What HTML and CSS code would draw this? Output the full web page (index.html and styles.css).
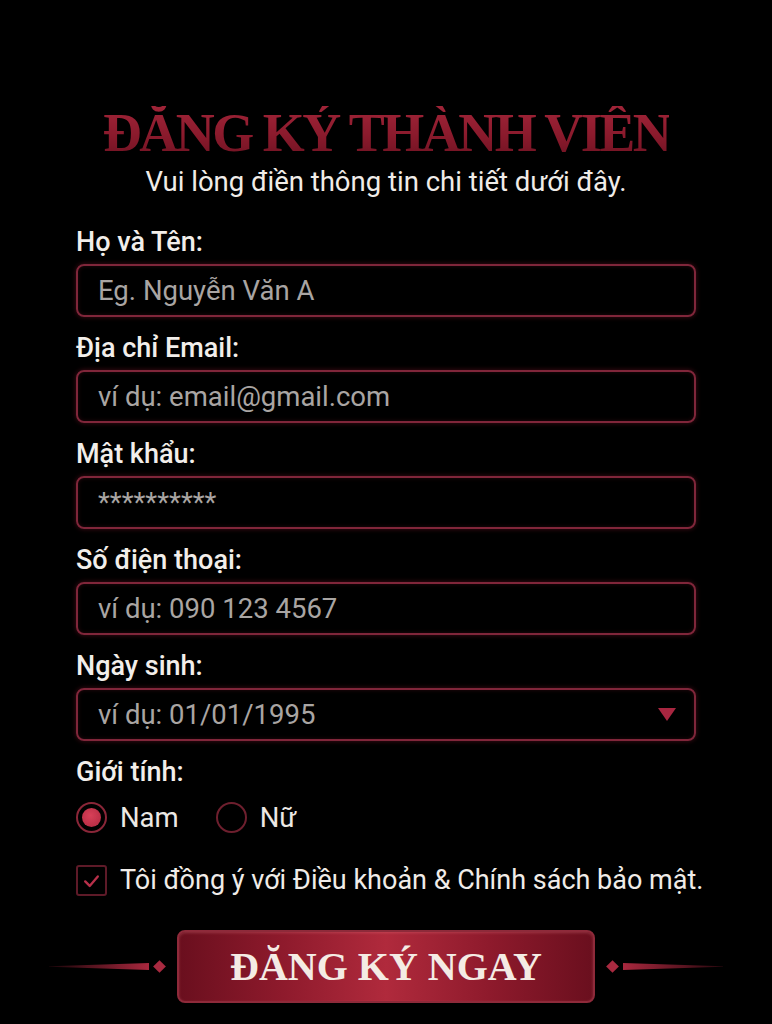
FILE: index.html
```html
<!DOCTYPE html>
<html lang="vi">
<head>
<meta charset="utf-8">
<title>Đăng ký thành viên</title>
<link rel="stylesheet" href="styles.css">
</head>
<body>
<main class="page">
  <h1 class="title">ĐĂNG KÝ THÀNH VIÊN</h1>
  <p class="subtitle">Vui lòng điền thông tin chi tiết dưới đây.</p>
  <form class="form">
    <div class="field">
      <label class="label">Họ và Tên:</label>
      <div class="input"><span class="ph">Eg. Nguyễn Văn A</span></div>
    </div>
    <div class="field">
      <label class="label">Địa chỉ Email:</label>
      <div class="input"><span class="ph">ví dụ: email@gmail.com</span></div>
    </div>
    <div class="field">
      <label class="label">Mật khẩu:</label>
      <div class="input"><span class="ph pw">**********</span></div>
    </div>
    <div class="field">
      <label class="label">Số điện thoại:</label>
      <div class="input"><span class="ph">ví dụ: 090 123 4567</span></div>
    </div>
    <div class="field">
      <label class="label">Ngày sinh:</label>
      <div class="input select"><span class="ph">ví dụ: 01/01/1995</span><span class="caret"></span></div>
    </div>
    <div class="field gender">
      <label class="label">Giới tính:</label>
      <div class="radios">
        <span class="radio-opt"><span class="radio checked"></span><span class="opt-text">Nam</span></span>
        <span class="radio-opt"><span class="radio"></span><span class="opt-text">Nữ</span></span>
      </div>
    </div>
    <div class="agree">
      <span class="checkbox"><svg viewBox="0 0 30 30" width="30" height="30"><path d="M8 15.5 L13 20.5 L22 10" fill="none" stroke="#b8304a" stroke-width="2.6" stroke-linecap="round" stroke-linejoin="round"/></svg></span>
      <span class="agree-text">Tôi đồng ý với Điều khoản &amp; Chính sách bảo mật.</span>
    </div>
  </form>
  <div class="submit-row">
    <span class="orn orn-left"><span class="bar"></span><span class="diamond"></span></span>
    <button class="submit" type="button">ĐĂNG KÝ NGAY</button>
    <span class="orn orn-right"><span class="diamond"></span><span class="bar"></span></span>
  </div>
</main>
</body>
</html>
```
FILE: styles.css
```css
html, body {
  margin: 0;
  padding: 0;
  background: #000;
}
body {
  font-family: Roboto, "Noto Sans", "Liberation Sans", sans-serif;
  color: #eeeae6;
  width: 772px;
  height: 1024px;
  overflow: hidden;
}
.page {
  display: flex;
  flex-direction: column;
  align-items: center;
  padding-top: 106px;
}
.title {
  margin: 0;
  font-family: "Liberation Serif", "DejaVu Serif", serif;
  font-weight: 700;
  font-size: 54px;
  line-height: 54px;
  letter-spacing: -2.5px;
  background: linear-gradient(180deg, #a02438 0%, #8a1a2c 55%, #6e1222 100%);
  -webkit-background-clip: text;
  background-clip: text;
  color: transparent;
}
.subtitle {
  margin: 7px 0 0;
  font-size: 27.5px;
  line-height: 30px;
  color: #f0ece8;
}
.form {
  width: 620px;
  margin-top: 30px;
  display: flex;
  flex-direction: column;
}
.field {
  display: flex;
  flex-direction: column;
  gap: 7px;
  margin-bottom: 16px;
}
.label {
  font-size: 27px;
  line-height: 30px;
  height: 30px;
  font-weight: 500;
  color: #f2eeea;
}
.input {
  box-sizing: border-box;
  height: 53px;
  border: 2px solid #80263a;
  border-radius: 8px;
  box-shadow: 0 0 5px rgba(150, 30, 50, 0.45), inset 0 0 4px rgba(150, 30, 50, 0.25);
  display: flex;
  align-items: center;
  padding: 0 20px;
}
.ph {
  font-size: 27.5px;
  color: #a9a5a3;
}
.select {
  justify-content: space-between;
}
.caret {
  width: 0;
  height: 0;
  border-left: 9px solid transparent;
  border-right: 9px solid transparent;
  border-top: 13px solid #a82640;
  margin-right: -2px;
}
.gender {
  gap: 15px;
  margin-bottom: 0;
}
.radios {
  display: flex;
  gap: 37px;
}
.radio-opt {
  display: flex;
  align-items: center;
  gap: 13px;
}
.radio {
  box-sizing: border-box;
  width: 31px;
  height: 31px;
  border-radius: 50%;
  border: 2.5px solid #6e1f2e;
  display: flex;
  align-items: center;
  justify-content: center;
}
.radio.checked::after {
  content: "";
  width: 19px;
  height: 19px;
  border-radius: 50%;
  background: radial-gradient(circle at 45% 40%, #d84058, #b02840);
}
.radio.checked {
  border-color: #8a2638;
}
.opt-text {
  font-size: 27.5px;
  line-height: 31px;
  color: #ece8e4;
}
.agree {
  margin-top: 32px;
  display: flex;
  align-items: center;
  gap: 13px;
}
.checkbox {
  flex: none;
  box-sizing: border-box;
  width: 31px;
  height: 31px;
  border: 2.5px solid #5e1a28;
  border-radius: 3px;
  display: flex;
  align-items: center;
  justify-content: center;
}
.checkbox svg {
  width: 28px;
  height: 28px;
}
.agree-text {
  font-size: 27px;
  line-height: 31px;
  white-space: nowrap;
  color: #f0ece8;
}
.submit-row {
  margin-top: 34px;
  display: flex;
  align-items: center;
  justify-content: center;
}
.submit {
  box-sizing: border-box;
  width: 418px;
  height: 73px;
  margin: 0 13px;
  border: 2px solid #8e2a3a;
  border-radius: 8px;
  background: linear-gradient(90deg, #6a0f1e 0%, #8e1a2c 25%, #b02a3c 50%, #8e1a2c 75%, #6a0f1e 100%);
  box-shadow: inset 0 1px 3px rgba(255, 150, 160, 0.25);
  font-family: "Liberation Serif", "DejaVu Serif", serif;
  font-weight: 700;
  font-size: 40px;
  color: #f4ebe4;
  padding: 0;
  line-height: 1;
}
.orn {
  display: flex;
  align-items: center;
  gap: 6px;
}
.diamond {
  width: 9px;
  height: 9px;
  background: #a82a40;
  transform: rotate(45deg);
}
.bar {
  width: 100px;
  height: 7px;
}
.orn-left .bar {
  background: linear-gradient(90deg, rgba(130, 25, 45, 0.2), #a8283e);
  clip-path: polygon(0 45%, 100% 0, 100% 100%, 0 55%);
}
.orn-right .bar {
  background: linear-gradient(90deg, #a8283e, rgba(130, 25, 45, 0.3));
  clip-path: polygon(0 0, 100% 45%, 100% 55%, 0 100%);
}
```
